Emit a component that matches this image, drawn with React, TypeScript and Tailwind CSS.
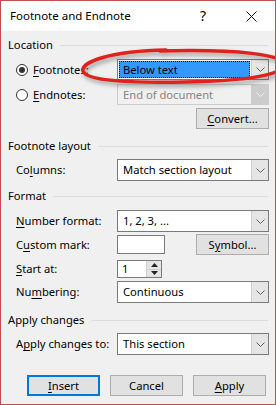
import React from "react";

const Chevron = ({ color = "#606060" }: { color?: string }) => (
  <svg width="9" height="5" viewBox="0 0 9 5">
    <polyline points="0.5,0.5 4.5,4.5 8.5,0.5" fill="none" stroke={color} strokeWidth="1" />
  </svg>
);

const Key = ({ children }: { children: React.ReactNode }) => <span className="underline underline-offset-2">{children}</span>;

const Select = ({ value, focused, disabled }: { value: string; focused?: boolean; disabled?: boolean }) => (
  <div
    className={`w-[152px] h-full flex border ${disabled ? "border-[#cccccc] bg-[#f0f0f0]" : "border-[#7a7a7a] bg-white"}`}
  >
    <div className="flex-1 flex items-center p-[1px]">
      {focused ? (
        <div className="w-full h-full bg-[#3399ff] border border-dotted border-[#1a1a1a] flex items-center pl-[3px] text-black">
          {value}
        </div>
      ) : (
        <span className={`pl-[4px] ${disabled ? "text-[#838383]" : "text-black"}`}>{value}</span>
      )}
    </div>
    <div
      className={`w-[17px] flex items-center justify-center border-l ${
        disabled ? "bg-[#cccccc] border-[#cccccc]" : "bg-[#e5e5e5] border-[#cfcfcf]"
      }`}
    >
      <Chevron color={disabled ? "#f0f0f0" : "#606060"} />
    </div>
  </div>
);

const Group = ({ title, className }: { title: string; className: string }) => (
  <div className={`h-[14px] flex items-center pl-[7px] pr-[7px] ${className}`}>
    <span>{title}</span>
    <div className="flex-1 h-px bg-[#dcdcdc] ml-[7px]" />
  </div>
);

const Field = ({ label, className, children }: { label: React.ReactNode; className: string; children: React.ReactNode }) => (
  <div className={`flex items-center pl-[15px] pr-[6px] ${className}`}>
    <div className="w-[101px]">{label}</div>
    {children}
  </div>
);

const Button = ({ children, primary }: { children: React.ReactNode; primary?: boolean }) => (
  <div
    className={`w-[73px] h-[21px] bg-[#e1e1e1] flex items-center justify-center ${
      primary ? "border-2 border-[#0078d7]" : "border border-[#adadad]"
    }`}
  >
    {children}
  </div>
);

const Radio = ({ checked }: { checked?: boolean }) => (
  <div className="w-[12px] h-[12px] rounded-full border border-[#333333] bg-white flex items-center justify-center">
    {checked && <div className="w-[6px] h-[6px] rounded-full bg-[#333333]" />}
  </div>
);

export default function App() {
  return (
    <div className="w-[276px] h-[405px] relative overflow-hidden border border-[#c0504d] bg-[#f0f0f0] flex flex-col text-[11.2px] text-black font-['Noto_Sans',sans-serif] leading-none">
      {/* title bar */}
      <div className="h-[30px] bg-white flex items-center pl-[9px] pr-[18px]">
        <span className="flex-1 text-[11.5px]">Footnote and Endnote</span>
        <span className="text-[14px] mr-[40px]">?</span>
        <svg width="11" height="11" viewBox="0 0 11 11">
          <path d="M0.5 0.5 L10.5 10.5 M10.5 0.5 L0.5 10.5" stroke="#111" strokeWidth="1" />
        </svg>
      </div>

      <Group title="Location" className="mt-[7px]" />
      <div className="h-[21px] mt-[7px] flex items-center pl-[15px] pr-[6px]">
        <Radio checked />
        <span className="ml-[5px] w-[84px]">
          <Key>F</Key>ootnotes:
        </span>
        <Select value="Below text" focused />
      </div>
      <div className="h-[21px] mt-[4px] flex items-center pl-[15px] pr-[6px]">
        <Radio />
        <span className="ml-[5px] w-[84px]">
          <Key>E</Key>ndnotes:
        </span>
        <Select value="End of document" disabled />
      </div>
      <div className="mt-[3px] flex justify-end pr-[6px]">
        <Button>
          <span>
            <Key>C</Key>onvert...
          </span>
        </Button>
      </div>

      <Group title="Footnote layout" className="mt-[10px]" />
      <Field
        className="h-[22px] mt-[6px]"
        label={
          <span>
            Co<Key>l</Key>umns:
          </span>
        }
      >
        <Select value="Match section layout" />
      </Field>

      <Group title="Format" className="mt-[8px]" />
      <Field
        className="h-[22px] mt-[7px]"
        label={
          <span>
            <Key>N</Key>umber format:
          </span>
        }
      >
        <Select value="1, 2, 3, ..." />
      </Field>
      <Field
        className="h-[21px] mt-[2px]"
        label={
          <span>
            C<Key>u</Key>stom mark:
          </span>
        }
      >
        <div className="w-[48px] h-[19px] bg-white border border-[#7a7a7a]" />
        <div className="flex-1 flex justify-end">
          <Button>
            <span>
              S<Key>y</Key>mbol...
            </span>
          </Button>
        </div>
      </Field>
      <Field
        className="h-[18px] mt-[5px]"
        label={
          <span>
            <Key>S</Key>tart at:
          </span>
        }
      >
        <div className="w-[45px] h-full bg-white border border-[#7a7a7a] flex">
          <span className="flex-1 pl-[4px] flex items-center">1</span>
          <div className="w-[15px] flex flex-col border-l border-[#cfcfcf]">
            <div className="flex-1 bg-[#e5e5e5] flex items-center justify-center border-b border-[#cfcfcf]">
              <svg width="7" height="4" viewBox="0 0 7 4">
                <polygon points="0,4 3.5,0 7,4" fill="#222" />
              </svg>
            </div>
            <div className="flex-1 bg-[#e5e5e5] flex items-center justify-center">
              <svg width="7" height="4" viewBox="0 0 7 4">
                <polygon points="0,0 3.5,4 7,0" fill="#222" />
              </svg>
            </div>
          </div>
        </div>
      </Field>
      <Field
        className="h-[22px] mt-[3px]"
        label={
          <span>
            Nu<Key>m</Key>bering:
          </span>
        }
      >
        <Select value="Continuous" />
      </Field>

      <Group title="Apply changes" className="mt-[10px]" />
      <Field
        className="h-[22px] mt-[6px]"
        label={
          <span>
            A<Key>p</Key>ply changes to:
          </span>
        }
      >
        <Select value="This section" />
      </Field>

      <div className="mt-[20px] flex pl-[26px] gap-[10px]">
        <Button primary>
          <span>
            <Key>I</Key>nsert
          </span>
        </Button>
        <Button>Cancel</Button>
        <Button>
          <span>
            <Key>A</Key>pply
          </span>
        </Button>
      </div>

      {/* red annotation ellipse */}
      <svg className="absolute left-[-1px] top-[-1px] pointer-events-none" width="276" height="405" viewBox="0 0 276 405">
        <defs>
          <filter id="sh" x="-20%" y="-50%" width="140%" height="200%">
            <feDropShadow dx="2" dy="3" stdDeviation="2" floodColor="#555" floodOpacity="0.55" />
          </filter>
        </defs>
        <path
          d="M166 50 C 110 51, 81 62, 83 71 C 86 81, 130 83, 185 82 C 250 81, 285 74, 284 64 C 283 55, 240 49, 160 51"
          fill="none"
          stroke="#e0201b"
          strokeWidth="3.5"
          strokeLinecap="round"
          filter="url(#sh)"
        />
      </svg>
    </div>
  );
}
